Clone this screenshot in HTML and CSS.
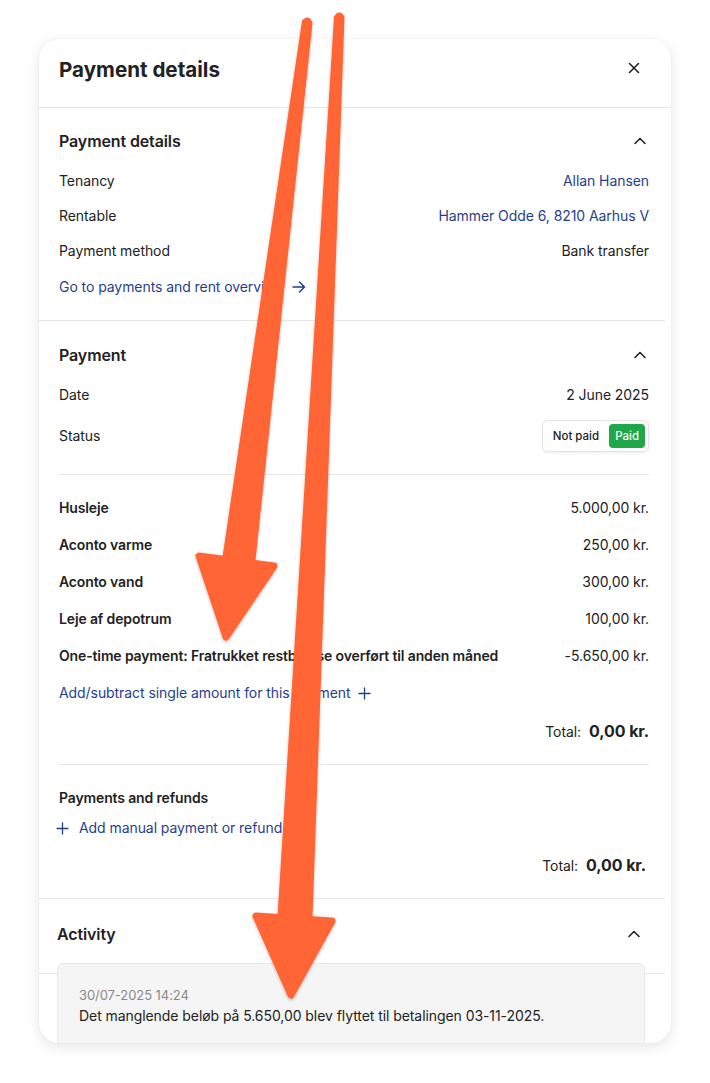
FILE: index.html
```html
<!DOCTYPE html>
<html lang="en">
<head>
<meta charset="utf-8">
<title>Payment details</title>
<link rel="stylesheet" href="styles.css">
</head>
<body>
<div class="page">
  <div class="card">
    <header class="card-head">
      <h1 class="card-title">Payment details</h1>
      <button class="icon-btn close" aria-label="Close">
        <svg width="12" height="12" viewBox="0 0 12 12"><path d="M1.5 1.5L10.5 10.5M10.5 1.5L1.5 10.5" stroke="#222" stroke-width="1.6" stroke-linecap="round" fill="none"/></svg>
      </button>
    </header>
    <div class="scroll">
      <section class="section s-details">
        <div class="sec-head">
          <h2 class="sec-title">Payment details</h2>
          <svg class="chev" width="14" height="8" viewBox="0 0 14 8"><path d="M2 6.5L7 1.5L12 6.5" stroke="#222" stroke-width="1.6" fill="none" stroke-linecap="round" stroke-linejoin="round"/></svg>
        </div>
        <div class="rows rows-a">
          <div class="row"><span>Tenancy</span><a class="link">Allan Hansen</a></div>
          <div class="row"><span>Rentable</span><a class="link">Hammer Odde 6, 8210 Aarhus V</a></div>
          <div class="row"><span>Payment method</span><span>Bank transfer</span></div>
        </div>
        <a class="link action go">Go to payments and rent overview
          <svg width="14" height="12" viewBox="0 0 14 12"><path d="M1 6H12.5M7.5 1L12.5 6L7.5 11" stroke="#1f3f8c" stroke-width="1.5" fill="none" stroke-linecap="round" stroke-linejoin="round"/></svg>
        </a>
      </section>

      <section class="section s-payment">
        <div class="sec-head">
          <h2 class="sec-title">Payment</h2>
          <svg class="chev" width="14" height="8" viewBox="0 0 14 8"><path d="M2 6.5L7 1.5L12 6.5" stroke="#222" stroke-width="1.6" fill="none" stroke-linecap="round" stroke-linejoin="round"/></svg>
        </div>
        <div class="row date-row"><span>Date</span><span>2 June 2025</span></div>
        <div class="row status-row"><span>Status</span>
          <div class="toggle"><span class="opt">Not paid</span><span class="opt on">Paid</span></div>
        </div>
        <hr class="sep sep-a">
        <div class="rows rows-b">
          <div class="row"><b>Husleje</b><span>5.000,00 kr.</span></div>
          <div class="row"><b>Aconto varme</b><span>250,00 kr.</span></div>
          <div class="row"><b>Aconto vand</b><span>300,00 kr.</span></div>
          <div class="row"><b>Leje af depotrum</b><span>100,00 kr.</span></div>
          <div class="row"><b>One-time payment: Fratrukket restbeløse overført til anden måned</b><span>-5.650,00 kr.</span></div>
        </div>
        <a class="link action add-single">Add/subtract single amount for this payment
          <svg width="13" height="13" viewBox="0 0 13 13"><path d="M6.5 1V12M1 6.5H12" stroke="#1f3f8c" stroke-width="1.3" fill="none" stroke-linecap="round"/></svg>
        </a>
        <div class="total total-a"><span class="t-label">Total:</span><strong>0,00 kr.</strong></div>
        <hr class="sep sep-b">
        <h3 class="sub-title">Payments and refunds</h3>
        <a class="link action add-manual">
          <svg width="13" height="13" viewBox="0 0 13 13"><path d="M6.5 1V12M1 6.5H12" stroke="#1f3f8c" stroke-width="1.3" fill="none" stroke-linecap="round"/></svg>
          Add manual payment or refund</a>
        <div class="total total-b"><span class="t-label">Total:</span><strong>0,00 kr.</strong></div>
      </section>

      <section class="section s-activity">
        <div class="act-head">
          <h2 class="sec-title">Activity</h2>
          <svg class="chev" width="14" height="8" viewBox="0 0 14 8"><path d="M2 6.5L7 1.5L12 6.5" stroke="#222" stroke-width="1.6" fill="none" stroke-linecap="round" stroke-linejoin="round"/></svg>
        </div>
        <div class="act-box">
          <div class="act-time">30/07-2025 14:24</div>
          <div class="act-msg">Det manglende beløb på 5.650,00 blev flyttet til betalingen 03-11-2025.</div>
        </div>
      </section>
    </div>
  </div>

  <svg class="annot" width="710" height="1083" viewBox="0 0 710 1083" aria-hidden="true">
    <defs>
      <filter id="sh" x="-20%" y="-20%" width="140%" height="140%">
        <feDropShadow dx="0" dy="1.5" stdDeviation="1.5" flood-color="#000" flood-opacity="0.25"/>
      </filter>
    </defs>
    <g fill="#ff6534" stroke="#ff6534" stroke-linejoin="round" stroke-linecap="round" filter="url(#sh)">
      <path d="M303.5 21 L311 23 L254 560 L224 557 Z" stroke-width="3"/>
      <path d="M199 556 L274 566 L226 637 Z" stroke-width="7"/>
      <path d="M335.5 17 L343 17 L311 918 L279 916 Z" stroke-width="3"/>
      <path d="M256 916 L332 921 L291 995 Z" stroke-width="7"/>
      <circle cx="307.3" cy="22" r="4.5" stroke="none"/>
      <circle cx="339.3" cy="17" r="4.5" stroke="none"/>
    </g>
  </svg>
</div>
</body>
</html>
```

FILE: styles.css
```css
* { box-sizing: border-box; }
html, body { margin: 0; padding: 0; background: #fff; }
body {
  font-family: Inter, "Noto Sans", "Liberation Sans", sans-serif;
  font-size: 14px;
  letter-spacing: -0.07px;
  color: #222;
  -webkit-font-smoothing: antialiased;
}
.page {
  position: relative;
  width: 710px;
  height: 1083px;
  padding: 39px 39px 40px;
}
.card {
  width: 632px;
  height: 1004px;
  background: #fff;
  border-radius: 20px;
  overflow: hidden;
  box-shadow: 0 4px 14px rgba(0,0,0,0.10), 0 0 2px rgba(0,0,0,0.06);
  display: flex;
  flex-direction: column;
}
.card-head {
  height: 69px;
  flex: none;
  display: flex;
  align-items: center;
  justify-content: space-between;
  padding: 0 22px 6px 20px;
  border-bottom: 1px solid #e6e6e6;
}
.card-title {
  margin: 0;
  font-size: 20.6px;
  font-weight: 700;
  letter-spacing: 0;
  line-height: 28px;
}
.icon-btn {
  border: 0;
  background: none;
  padding: 0;
  width: 12px;
  height: 12px;
  display: flex;
  margin-right: 9px;
}
.close { margin-top: -4px; }
.scroll {
  flex: 1;
  overflow: hidden;
  margin-right: 6px;
}
.section {
  border-bottom: 1px solid #e6e6e6;
  padding: 0 16px 0 20px;
  display: flex;
  flex-direction: column;
}
.sec-head, .act-head {
  display: flex;
  align-items: center;
  justify-content: space-between;
  height: 24px;
}
.sec-title {
  margin: 0;
  font-size: 16px;
  font-weight: 600;
  letter-spacing: -0.12px;
  line-height: 24px;
}
.chev { margin-right: 2px; }
.row {
  display: flex;
  justify-content: space-between;
  align-items: center;
  line-height: 20px;
  min-height: 20px;
}
.row b { font-weight: 600; letter-spacing: -0.14px; }
.link { color: #1f3f8c; text-decoration: none; }
.action {
  display: flex;
  align-items: center;
  gap: 8px;
  line-height: 20px;
  align-self: flex-start;
}

.s-details { padding-top: 21px; padding-bottom: 23px; }
.rows { display: flex; flex-direction: column; }
.rows-a { gap: 15px; margin-top: 18px; }
.go { margin-top: 16px; }

.s-payment { padding-top: 22px; padding-bottom: 21px; }
.date-row { margin-top: 18px; }
.status-row { margin-top: 15px; min-height: 32px; }
.toggle {
  display: flex;
  align-items: center;
  height: 32px;
  padding: 3px;
  border: 1px solid #e4e4e4;
  border-radius: 6px;
  box-shadow: 0 1px 3px rgba(0,0,0,0.08);
  font-size: 11.5px;
  font-weight: 500;
  letter-spacing: 0;
}
.opt { line-height: 24px; border-radius: 4px; }
.opt:first-child { padding: 0 10px 0 7px; }
.opt.on { background: #20a74a; color: #fff; padding: 0 6px; }
.sep {
  border: 0;
  border-top: 1px solid #e6e6e6;
  margin: 22px 0 0;
  height: 0;
}
.sep-b { margin-top: 21px; }
.rows-b { gap: 17px; margin-top: 23px; }
.add-single { margin-top: 17px; }
.total {
  display: flex;
  justify-content: flex-end;
  align-items: center;
  gap: 8px;
  height: 24px;
  margin-top: 16px;
}
.total strong { font-size: 16px; font-weight: 700; letter-spacing: -0.1px; }
.sub-title {
  margin: 23px 0 0;
  font-size: 14px;
  font-weight: 600;
  letter-spacing: -0.14px;
  line-height: 20px;
}
.add-manual { margin-top: 10px; margin-left: -3px; gap: 10px; }
.total-b { margin-top: 15px; margin-right: 3px; }

.s-activity { border-bottom: 0; padding: 0 20px 0 18px; }
.act-head {
  height: 75px;
  padding-bottom: 5px;
  border-bottom: 1px solid #e6e6e6;
  margin: 0 -26px 0 -18px;
  padding-left: 18px;
  padding-right: 28px;
}
.act-box {
  margin-top: -11px;
  background: #f5f5f5;
  border: 1px solid #e8e8e8;
  border-radius: 6px;
  padding: 22px 21px 20px;
  position: relative;
}
.act-time {
  font-size: 13px;
  color: #8a8a8a;
  line-height: 18px;
}
.act-msg { line-height: 20px; margin-top: 2px; }

.annot {
  position: absolute;
  left: 0;
  top: 0;
  pointer-events: none;
}
```
